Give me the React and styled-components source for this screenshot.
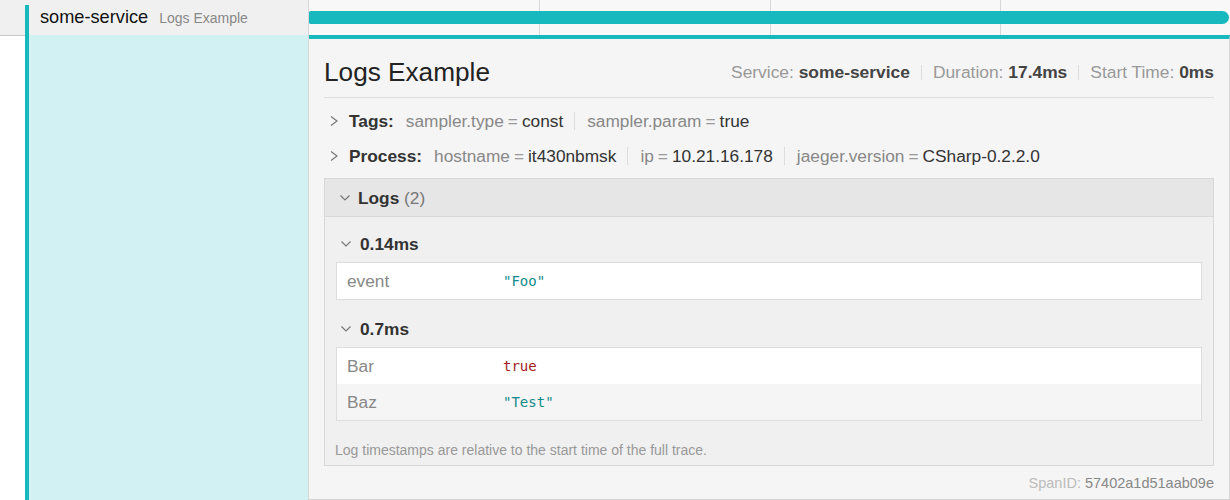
import React from 'react';
import styled, { createGlobalStyle } from 'styled-components';

const TEAL = '#17b8be';

const Global = createGlobalStyle`
  html, body { margin: 0; padding: 0; background: #fff; }
  body {
    font-family: "Liberation Sans", Arial, sans-serif;
    font-size: 17.3px;
    color: #333;
  }
  * { box-sizing: border-box; }
`;

const Page = styled.div`
  width: 1230px;
  height: 500px;
  overflow: hidden;
  display: flex;
  flex-direction: column;
`;

/* ---------- span row ---------- */
const SpanRow = styled.div`
  display: flex;
  height: 35px;
  flex: none;
`;

const SpanNameCell = styled.div`
  width: 309px;
  flex: none;
  display: flex;
  padding: 5px 0 0 25px;
  background: #f0f0f0;
  border-right: 1px solid #d8d8d8;
`;

const SpanNameWrapper = styled.div`
  flex: 1;
  display: flex;
  align-items: baseline;
  border-left: 4px solid ${TEAL};
  padding: 2px 0 0 11px;
  line-height: 20px;
  white-space: nowrap;
`;

const ServiceName = styled.span`
  font-size: 18.2px;
  color: #111;
`;

const OperationName = styled.span`
  font-size: 14px;
  color: #888;
  margin-left: 11px;
`;

const Timeline = styled.div`
  flex: 1;
  position: relative;
  background: #f8f8f8;
`;

const Tick = styled.div`
  position: absolute;
  top: 0;
  bottom: 0;
  width: 1px;
  background: #d8d8d8;
`;

const SpanBar = styled.div`
  position: absolute;
  left: 0;
  right: 1px;
  top: 11px;
  height: 12.5px;
  background: ${TEAL};
  border-radius: 2px 7px 7px 2px;
`;

/* ---------- detail row ---------- */
const DetailRow = styled.div`
  display: flex;
  flex: 1;
  min-height: 0;
`;

const DetailNameCell = styled.div`
  width: 309px;
  flex: none;
  display: flex;
  padding-left: 25px;
  background: #fff;
  border-top: 1px solid #c8c8c8;
  border-right: 1px solid #d8d8d8;
`;

const DetailAccent = styled.div`
  flex: 1;
  margin-top: -1px;
  border-left: 4px solid ${TEAL};
  background: #d1f1f2;
`;

const DetailPanel = styled.div`
  flex: 1;
  display: flex;
  flex-direction: column;
  background: #f5f5f5;
  border-top: 4px solid ${TEAL};
  border-right: 1px solid #d3d3d3;
  border-bottom: 1px solid #d3d3d3;
  padding: 0 15px;
  overflow: hidden;
`;

const Header = styled.div`
  display: flex;
  align-items: center;
  justify-content: space-between;
  margin-top: 18px;
  padding-bottom: 10px;
  border-bottom: 1px solid #ddd;
`;

const Title = styled.h2`
  margin: 0;
  font-size: 26.2px;
  line-height: 30px;
  font-weight: normal;
  color: #222;
`;

const Overview = styled.div`
  display: flex;
  align-items: center;
  font-size: 17.4px;
  line-height: 20px;
  white-space: nowrap;
`;

const OverviewLabel = styled.span`
  color: #999;
`;

const OverviewValue = styled.strong`
  color: #444;
  font-weight: bold;
`;

const VDivider = styled.span`
  display: inline-block;
  flex: none;
  width: 1px;
  height: ${(p) => p.$h}px;
  background: #ddd;
  margin: ${(p) => p.$m};
`;

const KVSection = styled.div`
  margin: 5px 0;
`;

const KVRow = styled.div`
  display: flex;
  align-items: center;
  height: 35px;
  padding-left: 5px;
  line-height: 20px;
  white-space: nowrap;
`;

const KVLabel = styled.strong`
  color: #333;
  margin: 0 12px 0 10px;
`;

const KVKey = styled.span`
  color: #888;
`;

const KVEq = styled.span`
  color: #999;
  margin: 0 4px;
`;

const KVValue = styled.span`
  color: #333;
`;

/* ---------- logs ---------- */
const LogsBox = styled.div`
  border: 1px solid #d8d8d8;
  background: #f0f0f0;
`;

const LogsHeader = styled.div`
  display: flex;
  align-items: center;
  height: 38px;
  padding-left: 15px;
  background: #e6e6e6;
  border-bottom: 1px solid #d8d8d8;
  line-height: 20px;
`;

const HeaderText = styled.span`
  margin-left: ${(p) => p.$gap}px;
  color: #333;
  font-weight: bold;
`;

const Count = styled.span`
  font-weight: normal;
  color: #777;
`;

const LogsBody = styled.div`
  padding: 9px 11px 5px;
`;

const LogItem = styled.div`
  & + & {
    margin-top: 11px;
  }
`;

const LogItemHeader = styled.div`
  display: flex;
  align-items: center;
  height: 36px;
  padding-left: 5px;
  line-height: 20px;
`;

const KVTable = styled.div`
  border: 1px solid #ddd;
  background: #fff;
`;

const KVTableRow = styled.div`
  display: grid;
  grid-template-columns: 166px 1fr;
  align-items: center;
  height: 36px;
  background: ${(p) => (p.$alt ? '#f5f5f5' : '#fff')};
`;

const KVTableKey = styled.div`
  padding-left: 10px;
  color: #888;
  line-height: 20px;
`;

const KVTableValue = styled.div`
  font-family: "DejaVu Sans Mono", "Liberation Mono", monospace;
  font-size: 14px;
  line-height: 20px;
  color: ${(p) => (p.$kind === 'bool' ? '#a3201f' : '#138a8a')};
`;

const Footnote = styled.div`
  margin: 19px 0 0 -1px;
  font-size: 14px;
  line-height: 20px;
  color: #999;
`;

const SpanIdLine = styled.div`
  margin-top: 7px;
  text-align: right;
  font-size: 14.5px;
  line-height: 20px;
  color: #bbb;
`;

const SpanIdValue = styled.span`
  color: #888;
`;

function Chevron({ dir }) {
  const points = dir === 'down' ? '0.5,2.5 5,7 9.5,2.5' : '2,0.5 8,5 2,9.5';
  return (
    <svg width="10" height="10" viewBox="0 0 10 10" style={{ flex: 'none' }}>
      <polyline points={points} fill="none" stroke="#777" strokeWidth="1.2" />
    </svg>
  );
}

const tags = [
  ['sampler.type', 'const'],
  ['sampler.param', 'true'],
];

const process = [
  ['hostname', 'it430nbmsk'],
  ['ip', '10.21.16.178'],
  ['jaeger.version', 'CSharp-0.2.2.0'],
];

const logs = [
  { time: '0.14ms', fields: [['event', '"Foo"', 'string']] },
  {
    time: '0.7ms',
    fields: [
      ['Bar', 'true', 'bool'],
      ['Baz', '"Test"', 'string'],
    ],
  },
];

function KVLine({ label, items }) {
  return (
    <KVRow>
      <Chevron dir="right" />
      <KVLabel>{label}</KVLabel>
      {items.map(([k, v], i) => (
        <React.Fragment key={k}>
          {i > 0 && <VDivider $h={18} $m="0 12px 0 11px" />}
          <KVKey>{k}</KVKey>
          <KVEq>=</KVEq>
          <KVValue>{v}</KVValue>
        </React.Fragment>
      ))}
    </KVRow>
  );
}

export default function App() {
  const ticks = [25, 50, 75];
  return (
    <>
      <Global />
      <Page>
        <SpanRow>
          <SpanNameCell>
            <SpanNameWrapper>
              <ServiceName>some-service</ServiceName>
              <OperationName>Logs Example</OperationName>
            </SpanNameWrapper>
          </SpanNameCell>
          <Timeline>
            {ticks.map((t) => (
              <Tick key={t} style={{ left: `${t}%` }} />
            ))}
            <SpanBar />
          </Timeline>
        </SpanRow>
        <DetailRow>
          <DetailNameCell>
            <DetailAccent />
          </DetailNameCell>
          <DetailPanel>
            <Header>
              <Title>Logs Example</Title>
              <Overview>
                <OverviewLabel>Service:&nbsp;</OverviewLabel>
                <OverviewValue>some-service</OverviewValue>
                <VDivider $h={15} $m="0 11px" />
                <OverviewLabel>Duration:&nbsp;</OverviewLabel>
                <OverviewValue>17.4ms</OverviewValue>
                <VDivider $h={15} $m="0 11px" />
                <OverviewLabel>Start Time:&nbsp;</OverviewLabel>
                <OverviewValue>0ms</OverviewValue>
              </Overview>
            </Header>
            <KVSection>
              <KVLine label="Tags:" items={tags} />
              <KVLine label="Process:" items={process} />
            </KVSection>
            <LogsBox>
              <LogsHeader>
                <Chevron dir="down" />
                <HeaderText $gap={8}>
                  Logs <Count>(2)</Count>
                </HeaderText>
              </LogsHeader>
              <LogsBody>
                {logs.map((log) => (
                  <LogItem key={log.time}>
                    <LogItemHeader>
                      <Chevron dir="down" />
                      <HeaderText $gap={9}>{log.time}</HeaderText>
                    </LogItemHeader>
                    <KVTable>
                      {log.fields.map(([k, v, kind], i) => (
                        <KVTableRow key={k} $alt={i % 2 === 1}>
                          <KVTableKey>{k}</KVTableKey>
                          <KVTableValue $kind={kind}>{v}</KVTableValue>
                        </KVTableRow>
                      ))}
                    </KVTable>
                  </LogItem>
                ))}
                <Footnote>
                  Log timestamps are relative to the start time of the full trace.
                </Footnote>
              </LogsBody>
            </LogsBox>
            <SpanIdLine>
              SpanID: <SpanIdValue>57402a1d51aab09e</SpanIdValue>
            </SpanIdLine>
          </DetailPanel>
        </DetailRow>
      </Page>
    </>
  );
}
